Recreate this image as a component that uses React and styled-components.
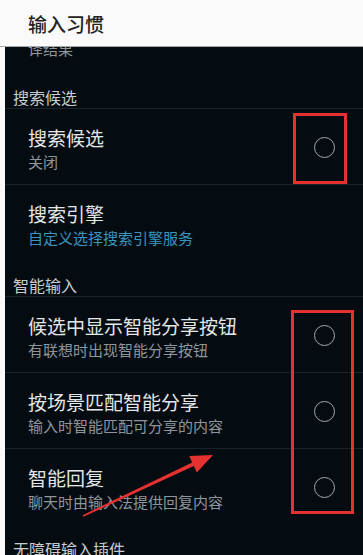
import React from "react";
import styled, { createGlobalStyle } from "styled-components";

const GlobalStyle = createGlobalStyle`
  html, body {
    margin: 0;
    padding: 0;
    background: #fafafa;
  }
  body {
    font-family: "Noto Sans CJK SC", "Noto Sans", sans-serif;
  }
`;

const Page = styled.div`
  position: relative;
  width: 363px;
  height: 555px;
  overflow: hidden;
  display: flex;
  flex-direction: column;
  background: #fafafa;
`;

const Header = styled.header`
  height: 46px;
  flex: none;
  display: flex;
  align-items: center;
  padding-left: 28px;
  background: #fafafa;
  border-bottom: 1px solid #a9a9a9;
  font-size: 19px;
  font-weight: 500;
  color: #232323;
  position: relative;
  z-index: 1;
`;

const Scroller = styled.div`
  flex: 1;
  overflow: hidden;
  margin-left: 5px;
  background: #040c12;
`;

const Tail = styled.div`
  margin-top: -8px;
  padding: 0 0 14px 23px;
  font-size: 15px;
  line-height: 20px;
  color: #8f969b;
`;

const SectionTitle = styled.div`
  padding: 14px 0 1px 8px;
  font-size: 16px;
  line-height: 20px;
  color: #c9cccd;
  border-bottom: 1px solid #18232b;
`;

const Row = styled.div`
  display: flex;
  align-items: center;
  padding: 17px 28px 12px 23px;
  border-bottom: 1px solid ${(p) => (p.$last ? "transparent" : "#18232b")};
  height: 46px;
`;

const Texts = styled.div`
  flex: 1;
  display: flex;
  flex-direction: column;
  gap: 2px;
`;

const Title = styled.div`
  font-size: 19px;
  line-height: 24px;
  color: #e4e6e7;
`;

const Summary = styled.div`
  font-size: 15px;
  line-height: 20px;
  color: ${(p) => (p.$link ? "#3a95bd" : "#8f969b")};
`;

const Radio = styled.span`
  width: 19px;
  height: 19px;
  border-radius: 50%;
  border: 1.5px solid #a3aaae;
  margin-top: -4px;
`;

const Mark = styled.div`
  position: absolute;
  border: 3px solid #e5312f;
  left: ${(p) => p.$x}px;
  top: ${(p) => p.$y}px;
  width: ${(p) => p.$w}px;
  height: ${(p) => p.$h}px;
  box-sizing: border-box;
  pointer-events: none;
`;

const Overlay = styled.svg`
  position: absolute;
  left: 0;
  top: 0;
  pointer-events: none;
`;

const sections = [
  {
    title: "搜索候选",
    items: [
      { title: "搜索候选", summary: "关闭", radio: true },
      { title: "搜索引擎", summary: "自定义选择搜索引擎服务", link: true },
    ],
  },
  {
    title: "智能输入",
    items: [
      { title: "候选中显示智能分享按钮", summary: "有联想时出现智能分享按钮", radio: true },
      { title: "按场景匹配智能分享", summary: "输入时智能匹配可分享的内容", radio: true },
      { title: "智能回复", summary: "聊天时由输入法提供回复内容", radio: true },
    ],
  },
  { title: "无障碍输入插件", items: [] },
];

export default function App() {
  return (
    <>
      <GlobalStyle />
      <Page>
        <Header>输入习惯</Header>
        <Scroller>
          <Tail>译结果</Tail>
          {sections.map((s) => (
            <section key={s.title}>
              <SectionTitle>{s.title}</SectionTitle>
              {s.items.map((it, i) => (
                <Row key={it.title} $last={i === s.items.length - 1}>
                  <Texts>
                    <Title>{it.title}</Title>
                    <Summary $link={it.link}>{it.summary}</Summary>
                  </Texts>
                  {it.radio && <Radio />}
                </Row>
              ))}
            </section>
          ))}
        </Scroller>
        <Mark $x={293} $y={113} $w={54} $h={71} />
        <Mark $x={291} $y={310} $w={63} $h={204} />
        <Overlay width="363" height="555" viewBox="0 0 363 555">
          <polygon
            fill="#e5312f"
            points="82.6,515.2 192.2,462.4 189.2,456 213,455 196.8,472.4 193.8,466 83.4,516.8"
          />
        </Overlay>
      </Page>
    </>
  );
}
